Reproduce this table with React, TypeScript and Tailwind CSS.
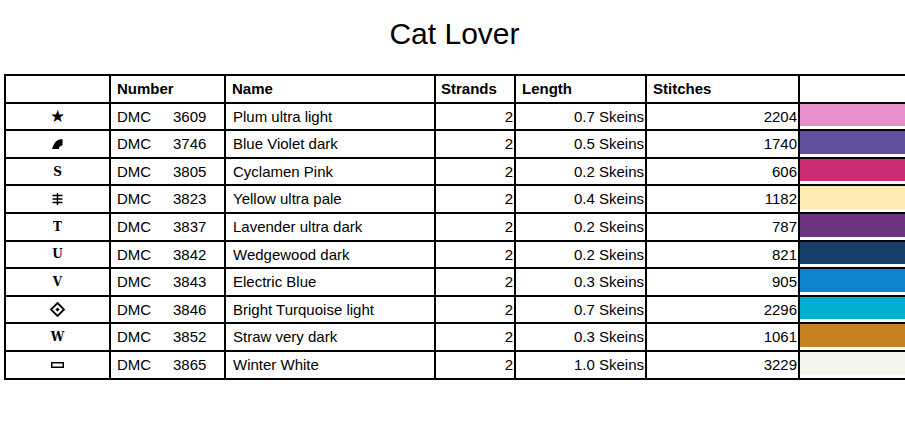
import React from 'react';

type Row = {
  sym: React.ReactNode;
  num: string;
  name: string;
  strands: number;
  length: string;
  stitches: number;
  color: string;
};

const Letter: React.FC<{ ch: string }> = ({ ch }) => (
  <span className="font-['DejaVu_Serif',serif] font-bold text-[12px] leading-none">{ch}</span>
);

const Arc = () => (
  <svg width="11" height="10" viewBox="0 0 11 10">
    <path d="M0 10 L1.5 6 A10 10 0 0 1 10.5 0 L10.5 6.5 A3.5 3.5 0 0 0 7 10 Z" fill="black" />
  </svg>
);

const TripleBar = () => (
  <svg width="11" height="12" viewBox="0 0 11 12">
    <path d="M0.5 2.5 H10.5 M0.5 6 H10.5 M0.5 9.5 H10.5 M5.5 0 V12" stroke="black" strokeWidth="1.5" />
  </svg>
);

const Diamond = () => (
  <svg width="15" height="15" viewBox="0 0 15 15">
    <path d="M7.5 1 L14 7.5 L7.5 14 L1 7.5 Z" fill="none" stroke="black" strokeWidth="1.8" />
    <rect x="6" y="6" width="3" height="3" fill="black" transform="rotate(45 7.5 7.5)" />
  </svg>
);

const Rect = () => (
  <svg width="13" height="6" viewBox="0 0 13 6">
    <rect x="0.75" y="0.75" width="11.5" height="4.5" fill="white" stroke="black" strokeWidth="1.5" />
  </svg>
);

const rows: Row[] = [
  { sym: <span className="text-[17px] font-['DejaVu_Sans',sans-serif] leading-none">★</span>, num: '3609', name: 'Plum ultra light', strands: 2, length: '0.7 Skeins', stitches: 2204, color: '#e68fcb' },
  { sym: <Arc />, num: '3746', name: 'Blue Violet dark', strands: 2, length: '0.5 Skeins', stitches: 1740, color: '#5f4f9d' },
  { sym: <Letter ch="S" />, num: '3805', name: 'Cyclamen Pink', strands: 2, length: '0.2 Skeins', stitches: 606, color: '#cd2b72' },
  { sym: <TripleBar />, num: '3823', name: 'Yellow ultra pale', strands: 2, length: '0.4 Skeins', stitches: 1182, color: '#feebb1' },
  { sym: <Letter ch="T" />, num: '3837', name: 'Lavender ultra dark', strands: 2, length: '0.2 Skeins', stitches: 787, color: '#6d347f' },
  { sym: <Letter ch="U" />, num: '3842', name: 'Wedgewood dark', strands: 2, length: '0.2 Skeins', stitches: 821, color: '#153e6b' },
  { sym: <Letter ch="V" />, num: '3843', name: 'Electric Blue', strands: 2, length: '0.3 Skeins', stitches: 905, color: '#0e83cc' },
  { sym: <Diamond />, num: '3846', name: 'Bright Turquoise light', strands: 2, length: '0.7 Skeins', stitches: 2296, color: '#00aed2' },
  { sym: <Letter ch="W" />, num: '3852', name: 'Straw very dark', strands: 2, length: '0.3 Skeins', stitches: 1061, color: '#c5821f' },
  { sym: <Rect />, num: '3865', name: 'Winter White', strands: 2, length: '1.0 Skeins', stitches: 3229, color: '#f5f4ec' },
];

const cols = 'grid grid-cols-[105px_115px_210px_80px_131px_153px_105px]';
const cell = 'border-r-2 border-black flex items-center';

export default function App() {
  return (
    <div className="w-[905px] h-[430px] bg-white overflow-hidden font-['Liberation_Sans',Arial,sans-serif] text-black">
      <div className="ml-[4px] w-[901px]">
        <h1 className="pt-[16px] h-[74px] text-center text-[30px] leading-[36px]">Cat Lover</h1>

        <div className="border-l-2 border-t-2 border-black text-[15px]">
          {/* Header */}
          <div className={`${cols} h-[27.6px] border-b-2 border-black font-bold`}>
            <div className={cell} />
            <div className={`${cell} pl-[6px]`}>Number</div>
            <div className={`${cell} pl-[6px]`}>Name</div>
            <div className={`${cell} pl-[5px]`}>Strands</div>
            <div className={`${cell} pl-[6px]`}>Length</div>
            <div className={`${cell} pl-[6px]`}>Stitches</div>
            <div />
          </div>

          {rows.map((r) => (
            <div key={r.num} className={`${cols} h-[27.6px] border-b-2 border-black`}>
              <div className={`${cell} justify-center`}>{r.sym}</div>
              <div className={`${cell} pl-[6px] pt-[1px]`}>
                <span className="w-[56px]">DMC</span>
                <span>{r.num}</span>
              </div>
              <div className={`${cell} pl-[7px] pt-[1px]`}>{r.name}</div>
              <div className={`${cell} justify-end pr-[1px] pt-[1px]`}>{r.strands}</div>
              <div className={`${cell} justify-end pr-[1px] pt-[1px]`}>{r.length}</div>
              <div className={`${cell} justify-end pr-[1px] pt-[1px]`}>{r.stitches}</div>
              <div className="pb-[3px]">
                <div className="h-full" style={{ backgroundColor: r.color }} />
              </div>
            </div>
          ))}
        </div>
      </div>
    </div>
  );
}
